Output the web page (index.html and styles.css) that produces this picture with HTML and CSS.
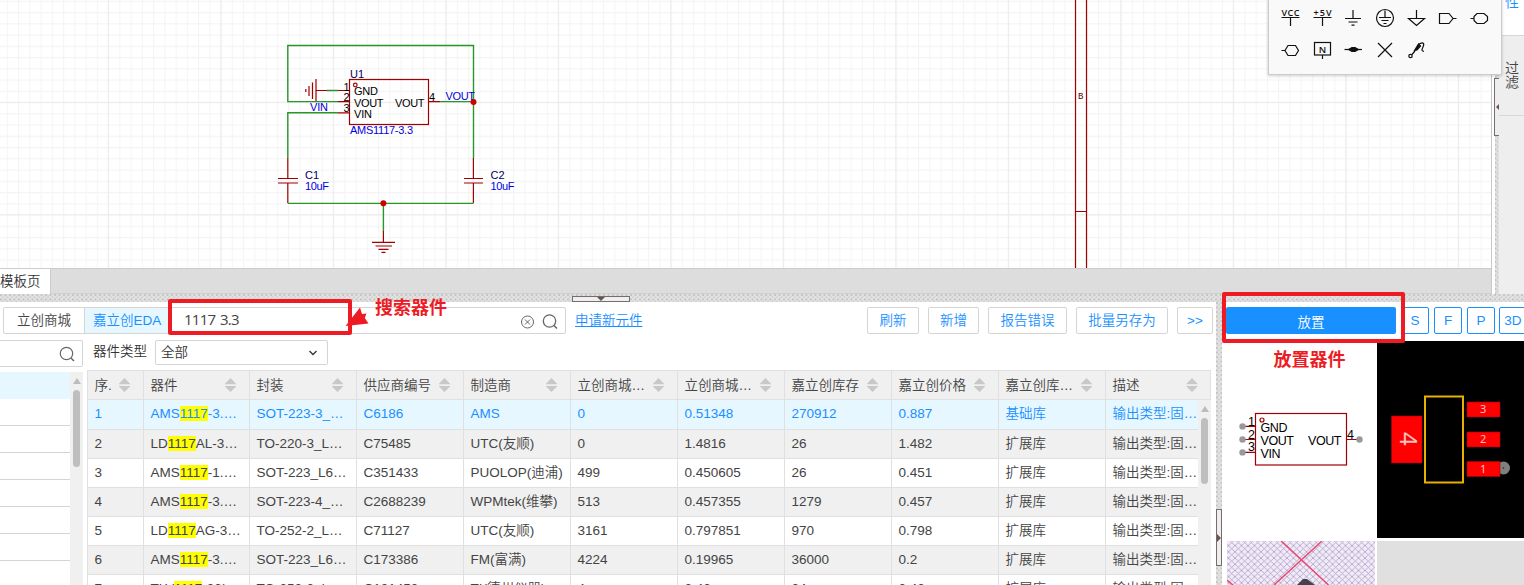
FILE: index.html
```html
<!DOCTYPE html>
<html lang="zh-CN">
<head>
<meta charset="utf-8">
<title>嘉立创EDA</title>
<link rel="stylesheet" href="styles.css">
</head>
<body>
<div class="app">
  <div class="workspace">
    <main class="editor">
      <svg class="schematic" viewBox="0 0 1491 268">
        <defs>
          <pattern id="minor" width="11.25" height="11.25" x="6.8" y="0.75" patternUnits="userSpaceOnUse">
            <path d="M.6 0V11.25M0 .6H11.25" stroke="#f4f4f4" fill="none"/>
          </pattern>
          <pattern id="major" width="112.5" height="112.5" x="107.8" y="101.8" patternUnits="userSpaceOnUse">
            <path d="M.6 0V112.5M0 .6H112.5" stroke="#ebebeb" fill="none"/>
          </pattern>
        </defs>
        <rect width="1491" height="268" fill="url(#minor)"/>
        <rect width="1491" height="268" fill="url(#major)"/>
        <g class="part">
          <path d="M1075.5 0V268M1086.5 0V268M1075 211.5H1087"/>
          <rect x="349.5" y="79.5" width="79" height="45"/>
          <circle cx="355.3" cy="85" r="1.8"/>
          <path d="M316 90.5H327M338 90.5H349M338 101.6H349M338 112.8H349M429 101.6H440"/>
          <path d="M316 79V102M312.5 82.5V99M309 86V96M305.8 89V92"/>
          <path d="M287.8 158V178M278 178.5H298M278 183H298M287.8 183V203M473.4 158V178M464 178.5H483M464 183H483M473.4 183V203"/>
          <path d="M383.4 231V242M372 242.4H395M375.5 246H392M378.5 249.3H388.5M381.5 252.3H385.5"/>
        </g>
        <path class="wire" d="M338 101.6H287.8V45.5H473.5V158M440 101.6H473.5M338 112.8H287.8V158M287.8 203.4H473.5M383.4 203.4V231M327 90.5H338"/>
        <circle cx="473.5" cy="102" r="3" fill="#c00"/><circle cx="383.4" cy="203.3" r="3" fill="#c00"/>
        <g class="label">
          <text x="354" y="95" textLength="24">GND</text>
          <text x="354" y="107" textLength="29.5">VOUT</text>
          <text x="354" y="118" textLength="18">VIN</text>
          <text x="395" y="107" textLength="29.5">VOUT</text>
          <text x="343.5" y="91">1</text><text x="343.5" y="101">2</text><text x="343.5" y="112">3</text><text x="429" y="101">4</text>
        </g>
        <g class="label navy">
          <text x="350" y="78">U1</text><text x="305" y="179">C1</text><text x="490.5" y="179">C2</text>
        </g>
        <g class="label blue">
          <text x="350" y="134" textLength="63">AMS1117-3.3</text>
          <text x="310" y="111" textLength="18">VIN</text>
          <text x="445.5" y="100" textLength="29.5">VOUT</text>
          <text x="305" y="190" textLength="24">10uF</text>
          <text x="490.5" y="190" textLength="24">10uF</text>
        </g>
        <text class="zone" x="1078" y="99">B</text>
      </svg>
      <div class="pagebar"><div class="page-tab">模板页</div></div>
    </main>
    <div class="v-gap"></div>
    <div class="v-split"></div>
    <aside class="side-tabs">
      <div class="side-tab active">性</div>
      <div class="side-tab">过<br>滤</div>
    </aside>
    <div class="handle side-handle"><i class="tri-left"></i></div>
    <div class="palette">
      <svg viewBox="0 0 232 74">
        <g class="pal-text"><text x="12.5" y="15.500" textLength="18">VCC</text><text x="44.5" y="15.500" textLength="18">+5V</text></g>
        <g class="glyph">
          <path d="M12.5 17.500H30.500M21.500 17.500V26M44.500 17.500H62.500M53.500 17.500V26"/>
          <path d="M84 10V18.500M76 18.500H92M79.500 22H88.500M82.500 25.200H85.500"/>
          <circle cx="116" cy="18" r="8.500"/><path d="M116 10.500V17.500M110 17.500H122M112.500 20.500H119.500M114.500 23.500H117.500"/>
          <path d="M147.500 10V18.500M139.500 18.500H155.500L147.500 25.500Z"/>
          <path d="M170.500 13.500H180L184 18.500L180 23.500H170.500ZM184 18.500H187.500"/>
          <path d="M201.500 18.500H205M205 16.500L208 13.500H215L218.500 16.500V20.500L215 23.500H208L205 20.500Z"/>
          <path d="M12.500 50.500H16M16 50.500L19 45.500H26.500L29.500 50.500L26.500 55.500H19Z"/>
          <rect x="45.500" y="42.500" width="16" height="12.500"/><path d="M53.500 55V59"/>
          <path d="M75.500 49.500H93"/><path d="M79.500 49.500L83 47.500H86L89.500 49.500L86 51.500H83Z" fill="#111"/>
          <path d="M109 43L123 57M123 43L109 57"/>
          <circle cx="141.500" cy="56" r="1.700"/><path d="M143 54.500L146 51M149.500 44.500C153.500 41.500 156 43 154 47C152.500 50 152.500 51 155 51.500"/>
          <path d="M145.500 50.500L149.500 44L151.500 46L148 50Z" fill="#111"/>
        </g>
        <text class="pal-n" x="49.800" y="52.500">N</text>
      </svg>
    </div>
  </div>

  <div class="h-split"><div class="handle bottom-handle"><i class="tri-down"></i></div></div>

  <div class="dock">
    <section class="library">
      <div class="toolbar">
        <div class="search-group">
          <div class="source">立创商城</div><div class="source on">嘉立创EDA</div>
          <div class="query">1117 3.3</div>
          <svg class="search-icons" width="42" height="20" viewBox="0 0 42 20">
            <g fill="none" stroke="#666"><circle cx="8.500" cy="10" r="6"/><path d="M6 7.500L11 12.500M11 7.500L6 12.500"/><circle cx="30.500" cy="9" r="6.200" stroke-width="1.300"/><path d="M35 13.500L38 16.500" stroke-width="1.500"/></g>
          </svg>
        </div>
        <a class="apply">申请新元件</a>
        <div class="actions">
          <button class="b1">刷新</button><button class="b2">新增</button><button class="b3">报告错误</button><button class="b4">批量另存为</button><button class="b5">&gt;&gt;</button>
        </div>
      </div>
      <div class="lower">
        <div class="tree">
          <div class="tree-search"><svg width="17" height="18" viewBox="0 0 17 18" fill="none" stroke="#666"><circle cx="7.500" cy="7.500" r="6.200" stroke-width="1.200"/><path d="M12 12L15 15" stroke-width="1.500"/></svg></div>
          <div class="tree-body">
            <div class="tree-list"><div class="leaf sel"></div><div class="leaf"></div><div class="leaf"></div><div class="leaf"></div><div class="leaf"></div><div class="leaf"></div><div class="leaf"></div><div class="leaf"></div></div>
            <div class="scroll"><i class="up"></i><b class="thumb"></b></div>
          </div>
        </div>
        <div class="results">
          <div class="filter"><span>器件类型</span><div class="select">全部<svg width="10" height="8" viewBox="0 0 10 8"><path d="M1.500 2L5 5.500L8.500 2" fill="none" stroke="#333" stroke-width="1.300"/></svg></div></div>
          <div class="row head">
            <div>序.<i></i></div><div>器件<i></i></div><div>封装<i></i></div><div>供应商编号<i></i></div><div>制造商<i></i></div><div>立创商城…<i></i></div><div>立创商城…<i></i></div><div>嘉立创库存<i></i></div><div>嘉立创价格<i></i></div><div>嘉立创库…<i></i></div><div>描述<i></i></div>
          </div>
          <div class="table-body">
            <div class="rows">
              <div class="row sel"><div>1</div><div>AMS<mark>1117</mark>-3.…</div><div>SOT-223-3_…</div><div>C6186</div><div>AMS</div><div>0</div><div>0.51348</div><div>270912</div><div>0.887</div><div>基础库</div><div>输出类型:固…</div></div>
              <div class="row"><div>2</div><div>LD<mark>1117</mark>AL-3…</div><div>TO-220-3_L…</div><div>C75485</div><div>UTC(友顺)</div><div>0</div><div>1.4816</div><div>26</div><div>1.482</div><div>扩展库</div><div>输出类型:固…</div></div>
              <div class="row"><div>3</div><div>AMS<mark>1117</mark>-1.…</div><div>SOT-223_L6…</div><div>C351433</div><div>PUOLOP(迪浦)</div><div>499</div><div>0.450605</div><div>26</div><div>0.451</div><div>扩展库</div><div>输出类型:固…</div></div>
              <div class="row"><div>4</div><div>AMS<mark>1117</mark>-3.…</div><div>SOT-223-4_…</div><div>C2688239</div><div>WPMtek(维攀)</div><div>513</div><div>0.457355</div><div>1279</div><div>0.457</div><div>扩展库</div><div>输出类型:固…</div></div>
              <div class="row"><div>5</div><div>LD<mark>1117</mark>AG-3…</div><div>TO-252-2_L…</div><div>C71127</div><div>UTC(友顺)</div><div>3161</div><div>0.797851</div><div>970</div><div>0.798</div><div>扩展库</div><div>输出类型:固…</div></div>
              <div class="row"><div>6</div><div>AMS<mark>1117</mark>-3.…</div><div>SOT-223_L6…</div><div>C173386</div><div>FM(富满)</div><div>4224</div><div>0.19965</div><div>36000</div><div>0.2</div><div>扩展库</div><div>输出类型:固…</div></div>
              <div class="row"><div>7</div><div>TLV<mark>1117</mark>-33I…</div><div>TO-252-2_L…</div><div>C131453</div><div>TI(德州仪器)</div><div>4</div><div>2.42</div><div>24</div><div>2.42</div><div>扩展库</div><div>输出类型:固…</div></div>
            </div>
            <div class="scroll"><i class="up"></i><b class="thumb short"></b></div>
          </div>
        </div>
      </div>
    </section>
    <div class="dock-split"><div class="handle dock-handle"><i class="tri-right"></i></div></div>
    <section class="preview">
      <div class="place-bar"><button class="place">放置</button><button class="view">S</button><button class="view">F</button><button class="view">P</button><button class="view">3D</button></div>
      <div class="tiles">
        <svg class="tile symbol" viewBox="1222 341 153 197">
          <g class="part"><rect x="1255.500" y="413.500" width="91" height="51.500"/><circle cx="1262" cy="420" r="2"/><path d="M1242 426.400H1255M1242 439.500H1255M1242 452.400H1255M1347 439.500H1359"/></g>
          <g fill="#999"><circle cx="1242.500" cy="426.400" r="3.200"/><circle cx="1242.500" cy="439.500" r="3.200"/><circle cx="1242.500" cy="452.400" r="3.200"/><circle cx="1359.500" cy="439.500" r="3.200"/></g>
          <g class="label big"><text x="1260.500" y="432" textLength="27">GND</text><text x="1260.500" y="445" textLength="33.500">VOUT</text><text x="1260.500" y="458" textLength="20">VIN</text><text x="1308" y="445" textLength="33.500">VOUT</text><text x="1248" y="426">1</text><text x="1248" y="439">2</text><text x="1248" y="451">3</text><text x="1347" y="439">4</text></g>
        </svg>
        <svg class="tile pcb" viewBox="1377 341 147 197">
          <rect x="1425" y="396.500" width="38" height="86" fill="none" stroke="#e8b000" stroke-width="2"/>
          <circle cx="1503.500" cy="468" r="6.500" fill="#808080"/><circle cx="1503.500" cy="468" r=".8" fill="#222"/>
          <g fill="red" stroke="#a00018" stroke-width=".6"><rect x="1391.500" y="416" width="30.500" height="47"/><rect x="1467" y="402" width="33" height="15"/><rect x="1467" y="432" width="33" height="15"/><rect x="1467" y="461.500" width="33" height="15"/></g>
          <g class="pad-num"><text x="1480" y="413">3</text><text x="1480" y="443">2</text><text x="1480" y="473">1</text><text class="pad4" transform="translate(1399.500 432) rotate(90)">4</text></g>
        </svg>
        <svg class="tile model" viewBox="1227 541 148 44">
          <defs><pattern id="hatch" width="6.500" height="6.200" patternUnits="userSpaceOnUse"><path d="M0 0L6.500 6.200M6.500 0L0 6.200" stroke="#a9a3b6" stroke-width=".8"/></pattern></defs>
          <rect x="1227" y="541" width="148" height="44" fill="#f2e9fc"/><rect x="1227" y="541" width="148" height="44" fill="url(#hatch)"/>
          <path d="M1281 541L1328.500 585M1322 541L1274 585M1227 580L1233 585" stroke="#e84a70" stroke-width="1.500"/>
          <path d="M1297 585L1303 579H1307L1315 585Z" fill="#45424f"/>
        </svg>
        <div class="tile empty"></div>
      </div>
    </section>
  </div>
  <svg class="notes" viewBox="0 0 1524 585">
    <g fill="none" stroke="#ed1c24" stroke-width="4" stroke-linejoin="round"><rect x="170" y="301" width="180" height="32"/><rect x="1224" y="294" width="179" height="47"/></g>
    <path d="M345.500 326L360 307.500L362 314L366.500 313.500L364.800 318L368.500 323.500Z" fill="#ed1c24"/>
    <text x="375" y="314">搜索器件</text><text x="1273.500" y="366">放置器件</text>
  </svg>
</div>
</body>
</html>
```
FILE: styles.css
```css
* { box-sizing: border-box; }
body { margin: 0; overflow: hidden; background: #fff; color: #444; font: 350 13.5px "Liberation Sans", "Noto Sans CJK SC", sans-serif; }
button { font: inherit; padding: 0; background: #fff; color: #1890ff; }
svg { display: block; }
.app { position: relative; width: 1524px; height: 585px; display: flex; flex-direction: column; overflow: hidden; }

/* schematic editor */
.workspace { position: relative; height: 294px; display: flex; flex: none; }
.editor { width: 1492px; border-right: 1px solid #c8c8c8; }
.schematic { width: 1491px; height: 268px; }
.part { fill: none; stroke: #a00000; stroke-width: 1.2; }
.wire { fill: none; stroke: #2a962a; stroke-width: 1.4; }
.label { font: 11px "Liberation Sans", sans-serif; fill: #000; }
.label.navy { fill: #000060; }
.label.blue { fill: #0000e0; }
.label.big { font-size: 12.5px; }
.zone { font: 9px "Liberation Mono", monospace; fill: #600000; }
.pagebar { height: 26px; background: #ddd; border-top: 1px solid #ccc; border-bottom: 1px solid #d0d0d0; }
.page-tab { width: 51px; height: 25px; background: #fff; border-right: 1px solid #ccc; line-height: 25px; white-space: nowrap; color: #333; }
.v-gap { width: 3px; }
.v-split, .h-split, .dock-split { background-color: #e1e1e1; background-image: radial-gradient(circle at 1px 1px, #bbb 0.6px, transparent 1px), radial-gradient(circle at 3px 3px, #c6c6c6 0.6px, transparent 1px); background-size: 4.5px 4.5px; }
.v-split { width: 4px; }
.side-tabs { flex: 1; background: #eee; color: #444; font-size: 14px; line-height: 14px; }
.side-tab { height: 80px; padding: 25px 0 0 6px; border-bottom: 1px solid #d8d8d8; }
.side-tab.active { height: 36px; padding-top: 0; background: #fff; color: #1890ff; line-height: 5px; }
.handle { position: absolute; background: #eee; border: 1px solid #776b6b; display: flex; align-items: center; justify-content: center; }
.side-handle { left: 1494px; top: 78px; width: 5px; height: 58px; border-right: 0; }
.tri-left { border: 3px solid transparent; border-right-color: #655; border-left: 0; }
.tri-right { border: 4px solid transparent; border-left-color: #655; border-right: 0; }
.tri-down { border: 4px solid transparent; border-top-color: #655; border-bottom: 0; }
.palette { position: absolute; left: 1268px; top: -2px; width: 234px; height: 77px; background: #f9f9f9; border: 1px solid #ccc; box-shadow: 0 1px 3px #0003; padding-top: 1px; }
.glyph { fill: none; stroke: #111; stroke-width: 1.2; }
.pal-text { font: 600 9px "Open Sans", sans-serif; fill: #111; }
.pal-n { font: 600 9.5px "Open Sans", sans-serif; fill: #111; }
.h-split { position: relative; flex: none; height: 8px; }
.bottom-handle { left: 572px; top: 2px; width: 58px; height: 6px; }

/* part library */
.dock { flex: 1; display: flex; min-height: 0; }
.library { width: 1216px; display: flex; flex-direction: column; }
.toolbar { display: flex; height: 38px; padding: 5px 0 0 3px; line-height: 25px; }
.search-group { display: flex; width: 563px; height: 27px; border: 1px solid #d5d5d5; border-radius: 2px; }
.source { width: 81px; border-right: 1px solid #d5d5d5; padding-left: 13px; line-height: 26px; }
.source.on { width: 85px; padding-left: 8px; background: #e6f7ff; color: #1890ff; border: 0; }
.query { flex: 1; padding-left: 14px; font: 15px/23px "Open Sans", sans-serif; letter-spacing: -0.75px; word-spacing: 1.5px; }
.search-icons { margin: 4px 4px 0 0; }
.apply { margin: 1px 0 0 9px; color: #1890ff; text-decoration: underline; }
.actions { margin-left: auto; margin-right: 3px; display: flex; gap: 9px; }
.actions button { height: 27px; border: 1px solid #d5d5d5; border-radius: 2px; }
.b1 { width: 52px; } .b2 { width: 51px; } .b3 { width: 79px; } .b4 { width: 92px; } .b5 { width: 36px; }
.lower { flex: 1; display: flex; gap: 4px; min-height: 0; }
.tree { width: 83px; display: flex; flex-direction: column; }
.tree-search { height: 27px; border: 1px solid #d5d5d5; border-left: 0; border-radius: 0 2px 2px 0; display: flex; justify-content: flex-end; padding: 5px 6px 0 0; }
.tree-body { flex: 1; margin-top: 5px; display: flex; min-height: 0; overflow: hidden; }
.tree-list { width: 70px; }
.leaf { height: 27px; border-bottom: 1px solid #d5d5d5; }
.leaf.sel { background: #e6f7ff; border-color: #e6f7ff; }
.scroll { width: 13px; background: #f0f0f0; display: flex; flex-direction: column; align-items: center; padding-top: 6px; }
.up { border: 4px solid transparent; border-top: 0; border-bottom: 6px solid #bcbcbc; }
.thumb { width: 7px; height: 77px; margin-top: 6px; background: #bebebe; border-radius: 4px; }
.thumb.short { height: 66px; }
.results { width: 1124px; display: flex; flex-direction: column; }
.filter { height: 30px; display: flex; padding-left: 6px; gap: 8px; line-height: 24px; color: #333; }
.select { width: 173px; height: 25px; border: 1px solid #d5d5d5; border-radius: 2px; padding: 0 9px 0 5px; display: flex; justify-content: space-between; align-items: center; }
.row { height: 29px; line-height: 27px; display: grid; grid-template-columns: 57px 106px 107px 107px 107px 107px 107px 107px 107px 107px 105px; border-bottom: 1px solid #e0e0e0; white-space: nowrap; background: #fff; }
.row > div { border-right: 1px solid #e0e0e0; padding-left: 6.5px; height: 100%; min-width: 0; }
.row > div:first-child { border-left: 1px solid #e0e0e0; }
.row:nth-child(even) { background: #f0f0f0; }
.row.sel { height: 30px; color: #1890ff; background: #e6f7ff; }
.row.head { flex: none; height: 30px; background: #f0f0f0; border-top: 1px solid #e0e0e0; }
.head > div { display: flex; justify-content: space-between; padding-right: 12.5px; align-items: center; }
.head > div:last-child { padding-right: 12px; }
.head i { width: 12px; height: 14px; background: #c8c8c8; clip-path: polygon(50% 0, 100% 44%, 0 44%, 0 57%, 100% 57%, 50% 100%, 0 57%, 0 44%); }
mark { background: #ff0; color: inherit; }
.table-body { flex: 1; display: flex; min-height: 0; }
.rows { width: 1111px; overflow: hidden; }

/* part preview */
.dock-split { position: relative; width: 6px; }
.dock-handle { left: 0; top: 207px; width: 6px; height: 57px; }
.preview { flex: 1; min-width: 0; overflow: hidden; }
.place-bar { height: 39px; padding: 5px 0 0 4px; display: flex; gap: 5px; }
.place { width: 170px; height: 27px; flex: none; border: 0; border-radius: 2px; background: #1890ff; color: #fff; }
.view { width: 28px; height: 27px; flex: none; border: 1px solid #1890ff; border-radius: 2px; }
.view:last-child { margin-left: -1px; }
.tiles { display: grid; grid-template-columns: 153px 147px; grid-template-rows: 197px 44px; gap: 3px 2px; }
.tile { width: 100%; height: 100%; }
.pcb { background: #000; }
.model { width: 148px; margin-left: 5px; }
.empty { background: #e0e0e0; }
.pad-num { font: 11px "Noto Sans", sans-serif; fill: #ffc0c0; }
.pad4 { font-size: 24px; }
.notes { position: absolute; left: 0; top: 0; width: 1524px; height: 585px; pointer-events: none; font: bold 18px "Noto Sans CJK SC", sans-serif; fill: #ed1c24; }
```
